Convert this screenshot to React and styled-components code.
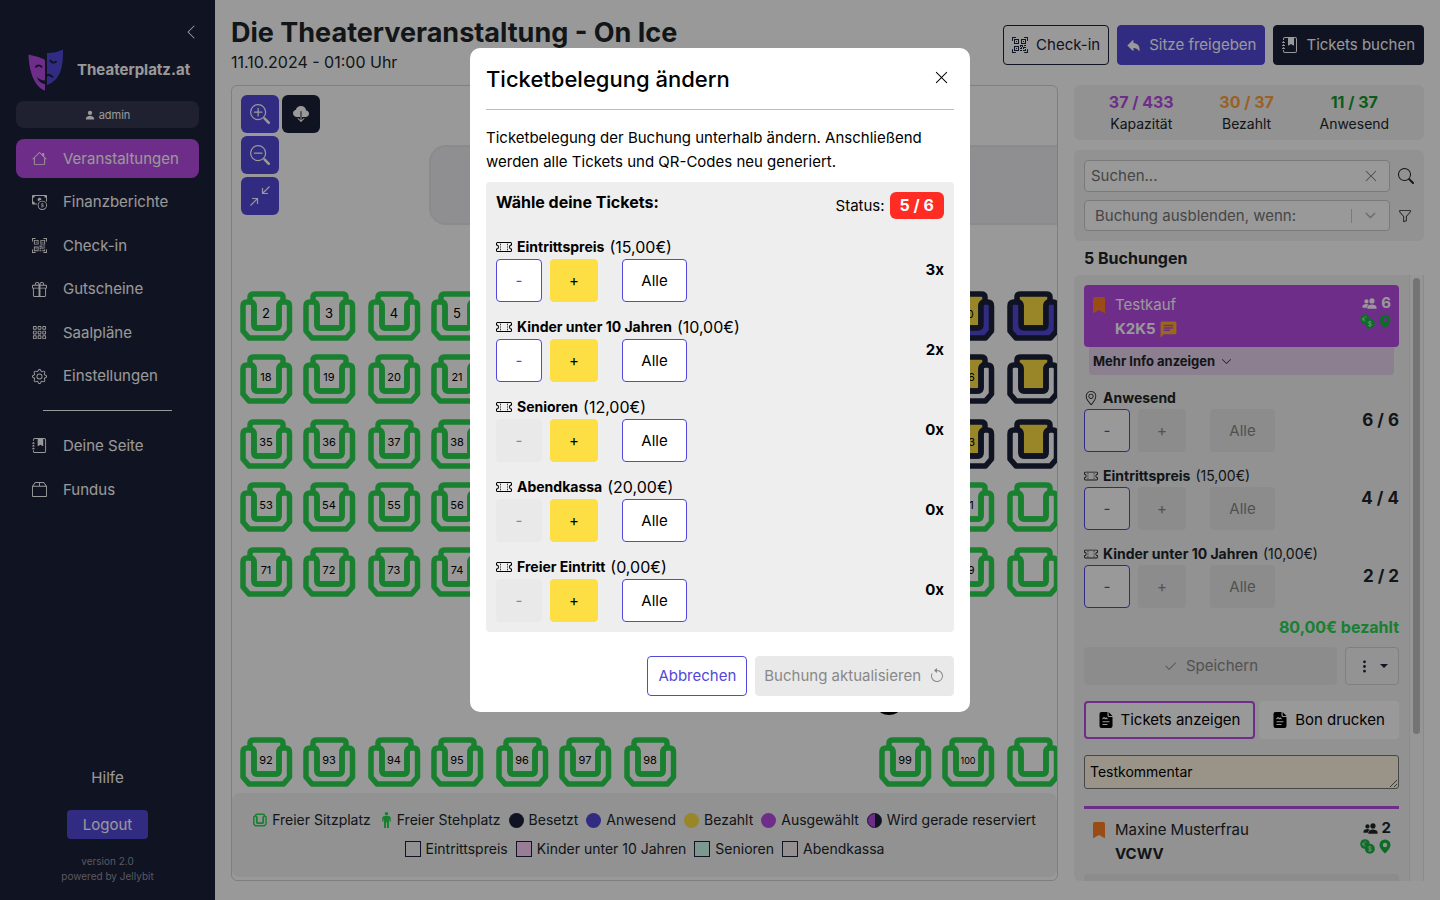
import React, { useState } from 'react';
import styled, { createGlobalStyle, css } from 'styled-components';
import {
  BsArrowCounterclockwise,
  BsBookmarkFill,
  BsBox2,
  BsCashCoin,
  BsCheck2,
  BsChevronDown,
  BsChevronLeft,
  BsCloudDownloadFill,
  BsFunnel,
  BsGear,
  BsGift,
  BsGrid3X3Gap,
  BsHouse,
  BsJournalBookmarkFill,
  BsQrCodeScan,
  BsSearch,
  BsThreeDotsVertical,
  BsTicketPerforated,
  BsXLg,
  BsZoomIn,
  BsZoomOut
} from 'react-icons/bs';
import { FiChevronDown } from 'react-icons/fi';
import { IoArrowUndo, IoPeopleSharp, IoPersonSharp } from 'react-icons/io5';
import { MdChat } from 'react-icons/md';
import { SlLocationPin } from 'react-icons/sl';

const dark = '#1c2038';
const purple = '#b94be6';
const blue = '#5248d9';
const green = '#2ad550';
const yellow = '#ffdf43';
const panel = '#f3f3f3';

{
  /* Data List */
}
const mainLinks = [
  { label: 'Veranstaltungen', icon: BsHouse, active: true },
  { label: 'Finanzberichte', icon: BsCashCoin },
  { label: 'Check-in', icon: BsQrCodeScan },
  { label: 'Gutscheine', icon: BsGift },
  { label: 'Saalpläne', icon: BsGrid3X3Gap },
  { label: 'Einstellungen', icon: BsGear }
];

const moreLinks = [
  { label: 'Deine Seite', icon: BsJournalBookmarkFill },
  { label: 'Fundus', icon: BsBox2 }
];

// left edge of each seat column, the last one runs out of the plan
const seatColumns = [8, 71, 136, 199, 264, 327, 392, 647, 710, 775];
const outerColumns = [0, 1, 2, 3, 8, 9];
const allColumns = [0, 1, 2, 3, 4, 5, 6, 7, 8, 9];

const seatRows = [
  { y: 205, first: 2, columns: outerColumns, taken: true, present: true },
  { y: 268, first: 18, columns: outerColumns, taken: true },
  { y: 333, first: 35, columns: outerColumns, taken: true },
  { y: 396, first: 53, columns: outerColumns },
  { y: 461, first: 71, columns: outerColumns },
  { y: 651, first: 92, columns: allColumns }
];

const categories = [
  { name: 'Eintrittspreis', price: '15,00€', amount: 3 },
  { name: 'Kinder unter 10 Jahren', price: '10,00€', amount: 2 },
  { name: 'Senioren', price: '12,00€', amount: 0 },
  { name: 'Abendkassa', price: '20,00€', amount: 0 },
  { name: 'Freier Eintritt', price: '0,00€', amount: 0 }
];

const GlobalStyle = createGlobalStyle`
  * {
    box-sizing: border-box;
  }

  body {
    margin: 0;
    background: white;
    color: #212529;
    font-family: Inter, 'Liberation Sans', sans-serif;
    font-size: 15px;
    line-height: 24px;
  }

  button,
  input,
  select,
  textarea {
    font-family: inherit;
    font-size: inherit;
    line-height: inherit;
  }

  button {
    cursor: pointer;
  }

  svg {
    display: block;
    flex-shrink: 0;
  }
`;

const Page = styled.div`
  display: grid;
  grid-template-columns: 215px minmax(0, 1fr);
  height: 100vh;
`;

{
  /* Sidebar */
}
const Sidebar = styled.aside`
  display: flex;
  flex-direction: column;
  padding: 24px 16px 16px;
  background: ${dark};
  color: white;
`;

const CollapseButton = styled.button`
  align-self: flex-end;
  height: 16px;
  padding: 0;
  border: none;
  background: none;
  color: white;
`;

const Brand = styled.div`
  display: flex;
  align-items: center;
  gap: 13px;
  margin: 9px 0 10px 12px;
  font-weight: bold;
`;

const UserBadge = styled.div`
  display: flex;
  align-items: center;
  justify-content: center;
  gap: 4px;
  height: 27px;
  margin-bottom: 11px;
  border-radius: 8px;
  background: #343850;
  font-size: 11px;
`;

const Nav = styled.nav`
  display: flex;
  flex-direction: column;
  justify-content: space-between;
  min-height: ${props => (props.$small ? '83px' : '257px')};
`;

const NavLink = styled.a`
  display: flex;
  align-items: center;
  gap: 16px;
  height: 39px;
  padding: 0 16px;
  border-radius: 8px;
  background: ${props => (props.$active ? purple : 'none')};
  color: white;
  text-decoration: none;

  svg {
    width: 15px;
    height: 15px;
  }
`;

const Divider = styled.hr`
  width: 129px;
  margin: 14px auto 15px;
  border: none;
  border-top: 1px solid white;
`;

const SidebarFooter = styled.div`
  display: flex;
  flex-direction: column;
  align-items: center;
  margin-top: auto;

  a {
    color: white;
    text-decoration: none;
  }
`;

const LogoutButton = styled.button`
  height: 29px;
  margin: 20px 0 15px;
  padding: 0 16px;
  border: none;
  border-radius: 4px;
  background: ${blue};
  color: white;
`;

const Version = styled.small`
  color: #94949f;
  font-size: 10px;
  line-height: 15px;
  text-align: center;
`;

{
  /* Main area */
}
const Content = styled.main`
  display: flex;
  flex-direction: column;
  min-width: 0;
  min-height: 0;
  padding: 16px 16px 19px;
`;

const Header = styled.header`
  display: flex;
  align-items: center;
  justify-content: space-between;
  height: 58px;
  margin-bottom: 11px;
`;

const Title = styled.h1`
  margin: 0;
  font-size: 27px;
  line-height: 34px;
`;

const EventDate = styled.div`
  font-size: 16px;
`;

const HeaderButtons = styled.div`
  display: flex;
  gap: 8px;
`;

const Button = styled.button`
  display: flex;
  align-items: center;
  justify-content: center;
  gap: 8px;
  height: 40px;
  padding: 0 8px;
  border: 1px solid ${dark};
  border-radius: 4px;
  background: white;
  color: ${dark};

  ${props =>
    props.$kind === 'dark' &&
    css`
      background: ${dark};
      color: white;
    `}

  ${props =>
    props.$kind === 'blue' &&
    css`
      border-color: ${blue};
      background: ${blue};
      color: white;
    `}

  ${props =>
    props.$kind === 'outline' &&
    css`
      padding: 0 10px;
      border-color: ${blue};
      color: ${blue};
    `}

  &:disabled {
    border-color: #e9e9e9;
    background: #e9e9e9;
    color: #888;
    cursor: default;
  }
`;

const Columns = styled.div`
  flex: 1;
  display: grid;
  grid-template-columns: minmax(0, 1fr) 350px;
  gap: 16px;
  min-height: 0;
`;

const PlanCard = styled.section`
  position: relative;
  display: flex;
  flex-direction: column;
  min-height: 0;
  padding-bottom: 3px;
  border: 1px solid #d4d4d4;
  border-radius: 6px;
`;

const Plan = styled.svg`
  flex: 1;
  width: 100%;
  min-height: 0;
  overflow: hidden;
`;

const PlanTools = styled.div`
  position: absolute;
  top: 9px;
  left: 9px;
  display: grid;
  grid-template-columns: 38px 38px;
  gap: 3px;
`;

const ToolButton = styled.button`
  display: flex;
  align-items: center;
  justify-content: center;
  height: 38px;
  padding: 0;
  border: none;
  border-radius: 6px;
  background: ${props => (props.$dark ? dark : blue)};
  color: white;
  grid-column: ${props => (props.$dark ? 2 : 1)};
`;

const Legend = styled.ul`
  display: flex;
  flex-wrap: wrap;
  justify-content: center;
  gap: 5px 8px;
  min-height: 84px;
  margin: 0;
  padding: 15px 16px 16px;
  border-radius: 8px;
  background: ${panel};
  font-size: 14px;
  list-style: none;
`;

const LegendItem = styled.li`
  display: flex;
  align-items: center;
  gap: 5px;
`;

const Dot = styled.span`
  width: 15px;
  height: 15px;
  border: ${props => (props.$ring ? `1px solid ${props.$ring}` : 'none')};
  border-radius: 50%;
  background: ${props => props.$color};
`;

const Square = styled.span`
  width: 16px;
  height: 16px;
  border: 1px solid ${dark};
  background: ${props => props.$color};
`;

{
  /* Right column */
}
const Side = styled.div`
  display: flex;
  flex-direction: column;
  min-height: 0;
`;

const Stats = styled.div`
  display: flex;
  justify-content: space-around;
  height: 55px;
  margin-bottom: 10px;
  padding: 6px 12px;
  border-radius: 6px;
  background: ${panel};
  text-align: center;
`;

const Stat = styled.div`
  font-size: 14px;
  line-height: 22px;

  strong {
    display: block;
    color: ${props => props.$color};
    font-size: 16px;
  }
`;

const Filters = styled.div`
  display: grid;
  grid-template-columns: minmax(0, 1fr) 17px;
  align-items: center;
  gap: 8px;
  padding: 10px 9px 10px 10px;
  border-radius: 6px;
  background: ${panel};
`;

const Field = styled.div`
  display: flex;
  align-items: center;
  height: ${props => (props.$select ? '31px' : '32px')};
  padding: 0 ${props => (props.$select ? '10px' : '11px')} 0 6px;
  border: 1px solid #ccc;
  border-radius: 4px;
  background: white;
  color: #757575;

  input,
  select {
    flex: 1;
    min-width: 0;
    padding: 0 0 0 ${props => (props.$select ? '4px' : '0')};
    border: none;
    background: none;
    color: inherit;
    appearance: none;
  }

  input::placeholder {
    color: #757575;
  }
`;

const Separator = styled.span`
  width: 1px;
  height: 14px;
  margin-right: 10px;
  background: #ccc;
`;

const ListTitle = styled.h2`
  margin: 5px 10px;
  font-size: 16px;
  line-height: 24px;
`;

const ListWrapper = styled.div`
  flex: 1;
  display: grid;
  grid-template-columns: minmax(0, 1fr) 15px;
  min-height: 0;
`;

const List = styled.div`
  min-height: 0;
  padding: 10px;
  border-radius: 6px 0 0 6px;
  background: ${panel};
  overflow: hidden;
`;

const ScrollTrack = styled.div`
  padding: 3px;
  border: solid #e8e8e8;
  border-width: 0 1px;
  background: #fafafa;
`;

const ScrollThumb = styled.div`
  height: 76%;
  border-radius: 4px;
  background: #c1c1c1;
`;

const Booking = styled.div`
  display: grid;
  grid-template-columns: 24px 1fr auto;
  height: 62px;
  padding: 8px 8px 8px 7px;
  border-radius: 4px;
  background: ${props => (props.$active ? purple : 'none')};
  color: ${props => (props.$active ? 'white' : 'inherit')};
`;

const BookingMark = styled(BsBookmarkFill)`
  margin-top: 4px;
  color: #ff7f24;
`;

const BookingName = styled.div`
  line-height: 24px;

  strong {
    display: flex;
    align-items: center;
    gap: 3px;
  }

  svg {
    color: #ffae2e;
  }
`;

const BookingState = styled.div`
  display: flex;
  flex-direction: column;
  align-items: flex-end;
  line-height: 20px;

  strong,
  span {
    display: flex;
    align-items: center;
    gap: 4px;
  }

  span {
    height: 16px;
    color: #14b840;
  }
`;

const MoreInfo = styled.button`
  display: flex;
  align-items: center;
  gap: 6px;
  width: calc(100% - 10px);
  height: 28px;
  margin: 0 5px 11px;
  padding: 0 4px;
  border: none;
  border-radius: 0 0 4px 4px;
  background: #e8d4f0;
  color: #212529;
  font-size: 13px;
  font-weight: bold;
`;

const CounterGroup = styled.div`
  display: grid;
  grid-template-columns: 1fr auto;
  margin-bottom: ${props => (props.$compact ? '12px' : '13px')};

  &:last-child {
    margin-bottom: 0;
  }
`;

const CounterLabel = styled.div`
  grid-column: 1 / 3;
  display: flex;
  align-items: center;
  gap: 5px;
  height: ${props => (props.$compact ? '23px' : '24px')};
  font-size: 14px;

  span {
    font-size: ${props => (props.$compact ? '14px' : '16px')};
  }
`;

const CounterButtons = styled.div`
  display: grid;
  grid-template-columns: 46px 48px 65px;
  column-gap: 8px;

  button:last-child {
    margin-left: 16px;
    width: 65px;
  }
`;

const CounterButton = styled.button`
  height: 43px;
  padding: 0;
  border: 1px solid ${blue};
  border-radius: 4px;
  background: white;
  color: ${props => (props.$text ? 'black' : blue)};

  ${props =>
    props.$plus &&
    css`
      border-color: #fddf43;
      background: #fddf43;
      color: black;
    `}

  &:disabled {
    border-color: #e9e9e9;
    background: #e9e9e9;
    color: #888;
  }
`;

const CounterValue = styled.strong`
  font-size: ${props => (props.$compact ? '17px' : '15px')};
  line-height: 22px;
`;

const Paid = styled.div`
  margin: 7px 0 8px;
  color: ${green};
  font-size: 16px;
  font-weight: bold;
  text-align: right;
`;

const ButtonRow = styled.div`
  display: grid;
  grid-template-columns: ${props => props.$columns};
  gap: ${props => props.$gap};
  margin-bottom: 16px;

  button {
    height: 38px;
  }
`;

const MenuButton = styled(Button)`
  border-color: #d4d4d4;
  background: #f6f6f6;
`;

const PrintButton = styled(Button)`
  border: ${props => (props.$marked ? `2px solid ${purple}` : 'none')};
  color: black;
`;

const Comment = styled.textarea`
  display: block;
  width: 100%;
  height: 34px;
  margin-bottom: 17px;
  padding: 4px 5px;
  border: 1px solid #777;
  border-radius: 3px;
  background: #fff6e3;
  color: black;
  font-size: 14px;
`;

const PurpleLine = styled.hr`
  margin: 0 0 1px;
  border: none;
  border-top: 3px solid ${purple};
`;

const NextBooking = styled.div`
  height: 62px;
  margin-top: 2px;
  border-radius: 4px;
  background: #e9e9e9;
`;

{
  /* Modal */
}
const Backdrop = styled.div`
  position: fixed;
  inset: 0;
  display: flex;
  align-items: flex-start;
  justify-content: center;
  padding-top: 48px;
  background: rgba(0, 0, 0, 0.4);
  z-index: 2;
`;

const Modal = styled.div`
  width: 500px;
  padding: 16px;
  border-radius: 10px;
  background: white;
  color: black;
`;

const ModalHeader = styled.div`
  display: flex;
  justify-content: space-between;
  padding-bottom: 15px;
  border-bottom: 1px solid #bbb;

  h2 {
    margin: 0;
    font-size: 22px;
    font-weight: 500;
    line-height: 30px;
  }
`;

const CloseButton = styled.button`
  height: 26px;
  padding: 0 5px;
  border: none;
  background: none;
  color: black;
`;

const ModalText = styled.p`
  margin: 16px 0 8px;
`;

const TicketBox = styled.div`
  padding: 10px;
  border-radius: 4px;
  background: #eee;
`;

const TicketHeader = styled.div`
  display: flex;
  justify-content: space-between;
  margin-bottom: 16px;
  font-size: 16px;
  line-height: 20px;
`;

const Status = styled.div`
  display: flex;
  align-items: center;
  gap: 5px;
  font-size: 15px;

  strong {
    padding: 0 10px;
    border-radius: 6px;
    background: #fe2c23;
    color: white;
    font-size: 16px;
    line-height: 27px;
  }
`;

const ModalFooter = styled.div`
  display: flex;
  justify-content: flex-end;
  gap: 8px;
  margin-top: 24px;
`;

{
  /* Drawings */
}
const Logo = () => (
  <svg width="36" height="42" viewBox="0 0 36 42">
    <path fill={purple} d="M.5 5.5c5 1.500 11 2 16.500 5.500v30.500C8 39 1 25 .5 5.500z" />
    <path fill={blue} d="M19 4c6 0 11-1 16-3.500.5 18-3 31-16 35.500z" />
    <path fill="none" stroke={dark} strokeWidth="1.800" d="M7.500 18.500c2-3 5-2.500 6.500 0" />
    <path fill={dark} d="M9 28c2 2 5 3.500 8 3.500v3.500c-4-.5-7-3-8-7z" />
    <path fill="none" stroke={dark} strokeWidth="1.800" d="M22 11c1.500 3 5 3.500 6.500 1" />
    <path fill="none" stroke={dark} strokeWidth="2" d="M18 26.500c3-1.500 5-.5 7 2" />
  </svg>
);

const ContractIcon = () => (
  <svg width="20" height="20" viewBox="0 0 20 20" fill="none" stroke="white" strokeWidth="1.200">
    <path d="M19.500 .5L12.500 7.500M12.500 2v5.500H18M.5 19.500l7-7M2 12.500h5.500V18" />
  </svg>
);

const CoinsIcon = () => (
  <svg width="15" height="15" viewBox="0 0 15 15">
    <circle cx="5" cy="5" r="4.800" fill="currentColor" />
    <path
      d="M6.700 3.200a2.300 2.300 0 1 0-.5 4M2 4.600h3M2 5.800h3"
      fill="none"
      stroke={panel}
      strokeOpacity=".7"
      strokeWidth=".7"
    />
    <circle cx="9.800" cy="9.800" r="5" fill="currentColor" />
    <path
      d="M11.500 8.300c-.6-1-3.300-1-3.300.3 0 1.500 3.400.8 3.400 2.300 0 1.400-2.800 1.400-3.500.3M9.900 6.800v6"
      fill="none"
      stroke={panel}
      strokeOpacity=".7"
      strokeWidth=".9"
    />
  </svg>
);

const PinIcon = () => (
  <svg width="12" height="15" viewBox="0 0 12 15">
    <path
      fill="currentColor"
      fillRule="evenodd"
      d="M6 .5A5.500 5.500 0 0 0 .5 6c0 3.800 5.500 8.500 5.500 8.500S11.500 9.800 11.500 6A5.500 5.500 0 0 0 6 .5zm0 3.300a2.200 2.200 0 1 1 0 4.400 2.200 2.200 0 0 1 0-4.400z"
    />
  </svg>
);

const FileIcon = () => (
  <svg width="14" height="16" viewBox="0 0 14 16">
    <path d="M3 0h5.500v3.500a1.500 1.500 0 0 0 1.500 1.500h3.500v9a2 2 0 0 1-2 2h-9a2 2 0 0 1-2-2V2a2 2 0 0 1 2-2z" />
    <path d="M9.600 0l3.900 3.900H10.200a.6.600 0 0 1-.6-.6z" />
    <path d="M3.500 7.200l1.500-1.700 1.200 1.200 1-.7 1.300 1.200M3.500 9.700h7M3.500 12.500h5" fill="none" stroke="white" strokeWidth="1.100" />
  </svg>
);

const PersonIcon = () => (
  <svg width="13" height="16" viewBox="-3 0 13 16" fill={green}>
    <circle cx="4.500" cy="1.800" r="1.800" />
    <path d="M2.500 4h4c1.500 0 2.300 1 2.300 2.400V9.500H7.400V7H7v9H5v-5.500H4V16H2V7h-.4v2.500H.2V6.400C.2 5 1 4 2.500 4z" />
  </svg>
);

const Seat = ({ stroke = green, fill = 'none', armFill = 'none' }) => (
  <g stroke={stroke} strokeWidth="5.500" strokeLinejoin="round">
    <path
      fill={fill}
      d="M14 33V15q0-3-4-5V6q0-3 4-3H39q4 0 4 3v4q-4 2-4 5V33q0 4-3 4H17q-3 0-3-4z"
    />
    <path
      fill={armFill}
      d="M14 15q0-4-4-4H7q-4 0-4 4V40l6 7H43.500l6-7V15q0-4-4-4H43q-4 0-4 4V33q0 4-3 4H17q-3 0-3-4z"
    />
  </g>
);

const seatProps = (row, column) => {
  if (!row.taken || column < 7) return {};
  return {
    stroke: dark,
    fill: yellow,
    armFill: row.present ? blue : 'none'
  };
};

const seatFont = number => {
  if (number > 99) return 9;
  return number > 9 ? 11 : 13;
};

const SeatPlan = () => (
  <Plan>
    <rect x="198" y="60" width="900" height="78" rx="16" fill="#eeeef4" stroke="#e8e8e8" strokeWidth="2" />
    <ellipse cx="657" cy="622" rx="11" ry="7" />
    {seatRows.map(row =>
      row.columns.map(i => (
        <g key={`${row.y}-${i}`} transform={`translate(${seatColumns[i]} ${row.y})`}>
          <Seat {...seatProps(row, i)} />
          {i < 9 && (
            <text x="26" y="27" textAnchor="middle" fontSize={seatFont(row.first + i)}>
              {row.first + i}
            </text>
          )}
        </g>
      ))
    )}
  </Plan>
);

const PlanLegend = () => (
  <Legend>
    <LegendItem>
      <svg width="14" height="14" viewBox="0 0 53 50">
        <Seat />
      </svg>
      Freier Sitzplatz
    </LegendItem>
    <LegendItem>
      <PersonIcon />
      Freier Stehplatz
    </LegendItem>
    <LegendItem><Dot $color={dark} />Besetzt</LegendItem>
    <LegendItem><Dot $color={blue} />Anwesend</LegendItem>
    <LegendItem><Dot $color={yellow} />Bezahlt</LegendItem>
    <LegendItem><Dot $color={purple} />Ausgewählt</LegendItem>
    <LegendItem>
      <Dot $color={`linear-gradient(90deg, ${purple} 50%, ${dark} 50%)`} $ring={dark} />
      Wird gerade reserviert
    </LegendItem>
    <LegendItem><Square $color="#f3f3f3" />Eintrittspreis</LegendItem>
    <LegendItem><Square $color="#fdd0f8" />Kinder unter 10 Jahren</LegendItem>
    <LegendItem><Square $color="#d0fdee" />Senioren</LegendItem>
    <LegendItem><Square $color="#fbeef2" />Abendkassa</LegendItem>
  </Legend>
);

const Links = ({ items, small }) => (
  <Nav $small={small}>
    {items.map(({ label, icon: Icon, active }) => (
      <NavLink key={label} href="#" $active={active}>
        <Icon />
        {label}
      </NavLink>
    ))}
  </Nav>
);

function Counter({ icon, name, price, value, noMinus, noPlus, compact }) {
  return (
    <CounterGroup $compact={compact}>
      <CounterLabel $compact={compact}>
        {icon}
        <strong>{name}</strong>
        {price && <span>({price})</span>}
      </CounterLabel>
      <CounterButtons>
        <CounterButton type="button" disabled={noMinus}>-</CounterButton>
        <CounterButton type="button" $plus disabled={noPlus}>+</CounterButton>
        <CounterButton type="button" $text disabled={noPlus}>Alle</CounterButton>
      </CounterButtons>
      <CounterValue $compact={compact}>{value}</CounterValue>
    </CounterGroup>
  );
}

function BookingHead({ name, code, count, active }) {
  return (
    <Booking $active={active}>
      <BookingMark size={16} />
      <BookingName>
        {name}
        <strong>
          {code}
          {active && <MdChat size={19} />}
        </strong>
      </BookingName>
      <BookingState>
        <strong>
          <IoPeopleSharp size={15} />
          {count}
        </strong>
        <span>
          <CoinsIcon />
          <PinIcon />
        </span>
      </BookingState>
    </Booking>
  );
}

const TicketModal = ({ onClose }) => (
  <Backdrop>
    <Modal role="dialog" aria-label="Ticketbelegung ändern">
      <ModalHeader>
        <h2>Ticketbelegung ändern</h2>
        <CloseButton type="button" aria-label="Schließen" onClick={onClose}>
          <BsXLg size={15} />
        </CloseButton>
      </ModalHeader>
      <ModalText>
        Ticketbelegung der Buchung unterhalb ändern. Anschließend werden alle
        Tickets und QR-Codes neu generiert.
      </ModalText>
      <TicketBox>
        <TicketHeader>
          <strong>Wähle deine Tickets:</strong>
          <Status>
            Status: <strong>5 / 6</strong>
          </Status>
        </TicketHeader>
        {categories.map(item => (
          <Counter
            key={item.name}
            icon={<BsTicketPerforated size={16} />}
            name={item.name}
            price={item.price}
            value={`${item.amount}x`}
            noMinus={item.amount === 0}
          />
        ))}
      </TicketBox>
      <ModalFooter>
        <Button type="button" $kind="outline" onClick={onClose}>
          Abbrechen
        </Button>
        <Button type="button" disabled>
          Buchung aktualisieren
          <BsArrowCounterclockwise size={16} />
        </Button>
      </ModalFooter>
    </Modal>
  </Backdrop>
);

const App = () => {
  const [open, setOpen] = useState(true);

  return (
    <>
      <GlobalStyle />
      <Page>
        <Sidebar>
          <CollapseButton type="button" aria-label="Menü einklappen">
            <BsChevronLeft size={16} />
          </CollapseButton>
          <Brand>
            <Logo />
            Theaterplatz.at
          </Brand>
          <UserBadge>
            <IoPersonSharp size={10} />
            admin
          </UserBadge>
          <Links items={mainLinks} />
          <Divider />
          <Links items={moreLinks} small />
          <SidebarFooter>
            <a href="#">Hilfe</a>
            <LogoutButton type="button">Logout</LogoutButton>
            <Version>
              version 2.0
              <br />
              powered by Jellybit
            </Version>
          </SidebarFooter>
        </Sidebar>

        <Content>
          <Header>
            <div>
              <Title>Die Theaterveranstaltung - On Ice</Title>
              <EventDate>11.10.2024 - 01:00 Uhr</EventDate>
            </div>
            <HeaderButtons>
              <Button type="button">
                <BsQrCodeScan size={16} />
                Check-in
              </Button>
              <Button type="button" $kind="blue">
                <IoArrowUndo size={15} />
                Sitze freigeben
              </Button>
              <Button type="button" $kind="dark">
                <BsJournalBookmarkFill size={16} />
                Tickets buchen
              </Button>
            </HeaderButtons>
          </Header>

          <Columns>
            <PlanCard>
              <SeatPlan />
              <PlanTools>
                <ToolButton type="button" aria-label="Vergrößern"><BsZoomIn size={20} /></ToolButton>
                <ToolButton type="button" aria-label="Herunterladen" $dark><BsCloudDownloadFill size={16} /></ToolButton>
                <ToolButton type="button" aria-label="Verkleinern"><BsZoomOut size={20} /></ToolButton>
                <ToolButton type="button" aria-label="Einpassen"><ContractIcon /></ToolButton>
              </PlanTools>
              <PlanLegend />
            </PlanCard>

            <Side>
              <Stats>
                <Stat $color={purple}><strong>37 / 433</strong>Kapazität</Stat>
                <Stat $color="#ffa23c"><strong>30 / 37</strong>Bezahlt</Stat>
                <Stat $color="#109a2e"><strong>11 / 37</strong>Anwesend</Stat>
              </Stats>
              <Filters>
                <Field>
                  <input type="text" aria-label="Suchen" placeholder="Suchen..." />
                  <BsXLg size={14} />
                </Field>
                <BsSearch size={16} color="#212529" />
                <Field $select>
                  <select aria-label="Buchung ausblenden">
                    <option>Buchung ausblenden, wenn:</option>
                  </select>
                  <Separator />
                  <FiChevronDown size={17} color="#bbb" />
                </Field>
                <BsFunnel size={14} color="#212529" />
              </Filters>
              <ListTitle>5 Buchungen</ListTitle>
              <ListWrapper>
                <List>
                  <BookingHead name="Testkauf" code="K2K5" count={6} active />
                  <MoreInfo type="button">
                    Mehr Info anzeigen
                    <BsChevronDown size={11} />
                  </MoreInfo>
                  <div>
                    <Counter icon={<SlLocationPin size={14} />} name="Anwesend" value="6 / 6" noPlus compact />
                    <Counter
                      icon={<BsTicketPerforated size={14} />}
                      name="Eintrittspreis"
                      price="15,00€"
                      value="4 / 4"
                      noPlus
                      compact
                    />
                    <Counter
                      icon={<BsTicketPerforated size={14} />}
                      name="Kinder unter 10 Jahren"
                      price="10,00€"
                      value="2 / 2"
                      noPlus
                      compact
                    />
                  </div>
                  <Paid>80,00€ bezahlt</Paid>
                  <ButtonRow $columns="1fr 54px" $gap="8px">
                    <Button type="button" disabled>
                      <BsCheck2 size={15} />
                      Speichern
                    </Button>
                    <MenuButton type="button" aria-label="Weitere Aktionen">
                      <BsThreeDotsVertical size={15} />
                      <svg width="8" height="4" viewBox="0 0 8 4">
                        <path d="M0 0h8L4 4z" fill="currentColor" />
                      </svg>
                    </MenuButton>
                  </ButtonRow>
                  <ButtonRow $columns="171px 1fr" $gap="4px">
                    <PrintButton type="button" $marked>
                      <FileIcon />
                      Tickets anzeigen
                    </PrintButton>
                    <PrintButton type="button">
                      <FileIcon />
                      Bon drucken
                    </PrintButton>
                  </ButtonRow>
                  <Comment aria-label="Kommentar" defaultValue="Testkommentar" />
                  <PurpleLine />
                  <BookingHead name="Maxine Musterfrau" code="VCWV" count={2} />
                  <NextBooking />
                </List>
                <ScrollTrack>
                  <ScrollThumb />
                </ScrollTrack>
              </ListWrapper>
            </Side>
          </Columns>
        </Content>
      </Page>
      {open && <TicketModal onClose={() => setOpen(false)} />}
    </>
  );
};

export default App;
